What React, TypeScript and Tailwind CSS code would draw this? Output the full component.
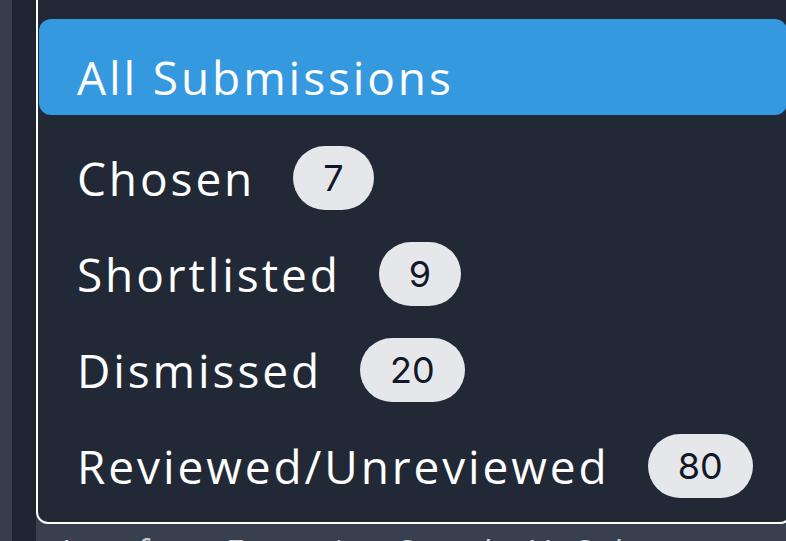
import React from "react";

const items = [
  { label: "Chosen", count: "7" },
  { label: "Shortlisted", count: "9" },
  { label: "Dismissed", count: "20" },
  { label: "Reviewed/Unreviewed", count: "80" },
];

export default function App() {
  return (
    <div className="w-[786px] h-[541px] overflow-hidden flex bg-[#1f2633]">
      <div className="w-[12px] shrink-0 h-full bg-[#373e4c]" />
      <div className="w-[24px] shrink-0 h-full bg-[#1f2633]" />
      <div className="w-[750px] shrink-0 h-full bg-[#384050] flex flex-col overflow-visible">
        <div className="mt-[-12px] w-[756px] shrink-0 border-2 border-white rounded-[12px] bg-[#212836] pt-[29px] pb-[23px] pl-[1px] pr-[3px] [font-family:'Open_Sans',sans-serif] text-white">
          <div className="h-[96px] rounded-[12px] bg-[#3599df] flex items-center pl-[38px] pt-[20px]">
            <span className="text-[46px] leading-[64px] tracking-[2.9px]">All Submissions</span>
          </div>
          {items.map((it) => (
            <div key={it.label} className="h-[96px] flex items-center pl-[38px] pt-[30px]">
              <span className="text-[46px] leading-[64px] tracking-[2.9px]">{it.label}</span>
              <span className="ml-[38px] h-[64px] px-[30px] rounded-full bg-[#e5e7eb] text-[#111827] text-[36px] leading-[64px] [font-family:Inter,sans-serif]">
                {it.count}
              </span>
            </div>
          ))}
        </div>
        <div className="pl-[26px] mt-[8px] text-[34px] leading-[40px] text-[#c9ced6] [font-family:'Open_Sans',sans-serif] whitespace-nowrap [word-spacing:14px]">
          Interface Favourite Search U Sub
        </div>
      </div>
    </div>
  );
}
